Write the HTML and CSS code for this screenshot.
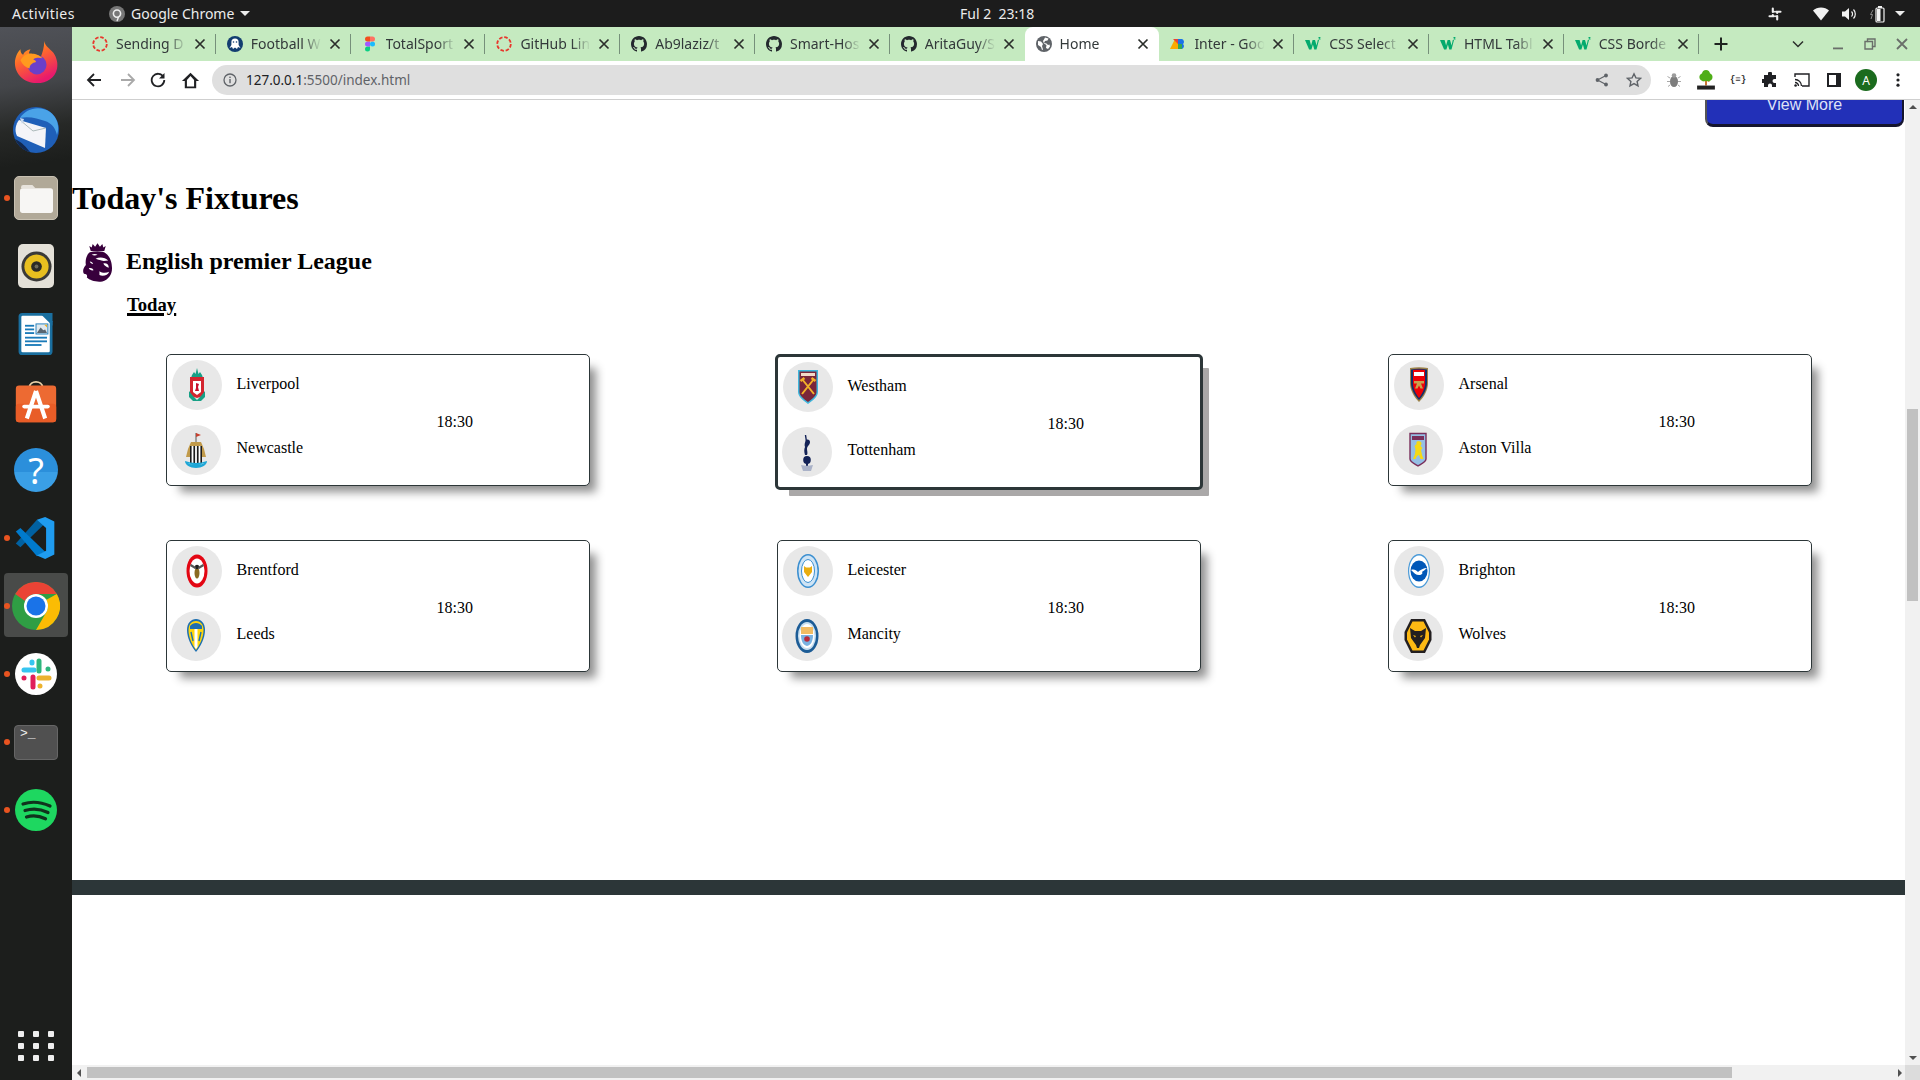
FILE: index.html
```html
<!DOCTYPE html>
<html lang="en">
<head>
<meta charset="utf-8">
<title>Home</title>
<link rel="stylesheet" href="styles.css">
</head>
<body>
<svg class="defs" width="0" height="0" aria-hidden="true">
  <defs>
    <symbol id="gh" viewBox="0 0 16 16"><path fill="#24292e" d="M8 0C3.58 0 0 3.58 0 8c0 3.54 2.29 6.53 5.47 7.59.4.07.55-.17.55-.38 0-.19-.01-.82-.01-1.49-2.01.37-2.53-.49-2.69-.94-.09-.23-.48-.94-.82-1.13-.28-.15-.68-.52-.01-.53.63-.01 1.08.58 1.23.82.72 1.21 1.87.87 2.33.66.07-.52.28-.87.51-1.07-1.78-.2-3.64-.89-3.64-3.95 0-.87.31-1.59.82-2.15-.08-.2-.36-1.02.08-2.12 0 0 .67-.21 2.2.82.64-.18 1.32-.27 2-.27.68 0 1.36.09 2 .27 1.53-1.04 2.2-.82 2.2-.82.44 1.1.16 1.92.08 2.12.51.56.82 1.27.82 2.15 0 3.07-1.87 3.75-3.65 3.95.29.25.54.73.54 1.48 0 1.07-.01 1.93-.01 2.2 0 .21.15.46.55.38A8.013 8.013 0 0016 8c0-4.42-3.58-8-8-8z"/></symbol>
    <symbol id="x" viewBox="0 0 16 16"><path d="M3.5 3.5l9 9M12.5 3.5l-9 9" stroke="#2b2f2b" stroke-width="1.7" fill="none"/></symbol>
    <symbol id="load" viewBox="0 0 16 16"><circle cx="8" cy="8" r="6.8" fill="none" stroke="#e8372c" stroke-width="1.8" stroke-dasharray="3.6 1.74"/></symbol>
    <symbol id="w3" viewBox="0 0 16 16"><path fill="#04aa6d" d="M0 4h4.600l1.500 5.400L7.600 4h2.400l1.600 5.400L12.800 4H14l-2.500 9.500H9.300L7.900 8.500l-1.500 5H4.100z"/><path fill="#04aa6d" d="M13.500 1h2v.6l-.9.8h.9v1.100h-2V3h1.100l-1.100-.8z"/></symbol>
  </defs>
</svg>

<header class="topbar">
  <div class="topbar-left">
    <span class="activities">Activities</span>
    <span class="appmenu">
      <svg class="ic16" viewBox="0 0 16 16"><circle cx="8" cy="8" r="8" fill="#777"/><circle cx="8" cy="7.600" r="3.600" fill="none" stroke="#eee" stroke-width="1.600"/><path d="M9.500 11l-1.500 4" stroke="#eee" stroke-width="1.400"/></svg>
      <span>Google Chrome</span>
      <i class="caret"></i>
    </span>
  </div>
  <div class="clock">Ful 2&nbsp; 23:18</div>
  <div class="tray">
    <svg class="tray-slack" viewBox="0 0 14 14"><g fill="none" stroke="#eee" stroke-width="2.100" stroke-linecap="round"><path d="M4.800 1.500v3.500M4.800 8v1M9.200 5v1M9.200 9v3.500M1.500 9.200h4.500M8 9.200h.5M8 4.800h4.500M5 4.800h1"/></g></svg>
    <svg class="tray-wifi" viewBox="0 0 16 14"><path fill="#f2f2f2" d="M8 13.500L0 3.600C2 1.700 5 .6 8 .6s6 1.100 8 3z"/></svg>
    <svg class="tray-vol" viewBox="0 0 16 14"><path fill="#f2f2f2" d="M1 4.500h3L8 1v12L4 9.500H1z"/><path d="M10.500 4.500a3.500 3.500 0 010 5M12.500 2.500a6.500 6.500 0 010 9" fill="none" stroke="#f2f2f2" stroke-width="1.200"/></svg>
    <svg class="tray-bat" viewBox="0 0 18 18"><path d="M4 5L1.500 9.500H3.500L2 14" fill="none" stroke="#888" stroke-width="1"/><rect x="7" y="3" width="8" height="14" rx="1" fill="none" stroke="#f2f2f2" stroke-width="1.200"/><rect x="9" y="1" width="4" height="2" fill="#f2f2f2"/><rect x="8" y="4" width="3.500" height="12" fill="#f2f2f2"/></svg>
    <i class="caret tray-caret"></i>
  </div>
</header>

<div class="desktop">
  <nav class="dock">
    <div class="dock-item">
      <svg class="dock-ic" viewBox="0 0 48 48"><defs><linearGradient id="ff" x1="0" y1="0" x2="0.500" y2="1"><stop offset="0" stop-color="#ffc21f"/><stop offset=".45" stop-color="#ff6a2b"/><stop offset="1" stop-color="#e8196d"/></linearGradient></defs><path fill="url(#ff)" d="M33 1c1 6 6 8 10 13 4 6 5 12 4 17-2 10-11 16-22 16C11 47 1 37 1 25c0-6 3-12 6-15 0 3 1 5 3 6 1-3 4-5 8-6-2 3-2 5-1 6 5-1 9 0 12 3 2-5 4-11 4-18z"/><circle cx="25" cy="27" r="10.500" fill="#6b3fc9"/><path fill="#ff9a1f" d="M7 22c3-5 8-8 13-7 5 0 9 3 11 5-3-1-7-1-10 1 2 1 3 2 3 3-4 1-7 3-7 7-4-1-8-4-10-9z"/></svg>
    </div>
    <div class="dock-item">
      <svg class="dock-ic dock-ic-lg" viewBox="0 0 48 48"><circle cx="24" cy="24" r="23" fill="#1f5fb8"/><path fill="#4aa3e8" d="M8 12C14 2 28-1 38 6c7 5 10 14 7 23-2-8-6-12-12-14-7-2-15-5-25-3z"/><path fill="#f4f4f8" d="M7 14l27 8-1 20L5 30c-3-6-1-12 2-16z"/><path fill="none" stroke="#9aa" stroke-width=".8" d="M8 14l13 11 13-3"/><path fill="#12284f" d="M3 33c3 7 9 12 15 13-4-5-7-9-15-13z"/><path fill="#c7d9ef" d="M8 12l4 1-2 5z"/></svg>
    </div>
    <div class="dock-item has-dot">
      <span class="tile tile-files"><svg viewBox="0 0 32 28"><path fill="#e7e3dc" d="M1 3a2 2 0 012-2h9l3 3H1z"/><rect x="0" y="4" width="32" height="24" rx="2.500" fill="#f7f6f4"/></svg></span>
    </div>
    <div class="dock-item">
      <span class="tile tile-rhythm"><svg viewBox="0 0 32 32"><circle cx="16" cy="16" r="15.500" fill="#3a3a38"/><circle cx="16" cy="16" r="12.500" fill="#e8bf1f"/><circle cx="16" cy="16" r="5.500" fill="#2b2a26"/><circle cx="16" cy="16" r="2" fill="#6d6a5b"/></svg></span>
    </div>
    <div class="dock-item">
      <svg class="dock-ic" viewBox="0 0 48 48"><path fill="#1a6f9f" d="M9 1h24l9 9v33a4 4 0 01-4 4H9a4 4 0 01-4-4V5a4 4 0 014-4z"/><rect x="8" y="4" width="31" height="40" rx="1.500" fill="#fff"/><path fill="#1a6f9f" d="M28 1h14v14z"/><g fill="#1a7ab8"><rect x="12" y="14" width="10" height="2"/><rect x="12" y="18" width="10" height="2"/><rect x="12" y="22" width="10" height="2"/><rect x="12" y="27" width="24" height="2"/><rect x="12" y="31" width="24" height="2"/><rect x="12" y="35" width="18" height="2"/></g><rect x="24" y="13" width="13" height="11" fill="#dfe8ee" stroke="#1a7ab8"/><path fill="#5a6670" d="M25 23l4-6 3 3 2-1 2 4z"/><path fill="#f2b021" d="M33 14h3v3z"/></svg>
    </div>
    <div class="dock-item">
      <svg class="dock-ic" viewBox="0 0 48 48"><path d="M17 8c0-8 14-8 14 0" fill="none" stroke="#e8d0a8" stroke-width="2"/><rect x="2" y="6" width="44" height="40" rx="3.500" fill="#ed6a32"/><rect x="2" y="26" width="44" height="20" rx="3.500" fill="#e95d27"/><path d="M24 12L14 42M24 12l10 30" stroke="#fff" stroke-width="4.500" fill="none"/><rect x="9" y="27" width="30" height="4" rx="2" fill="#fff"/></svg>
    </div>
    <div class="dock-item">
      <span class="help">?</span>
    </div>
    <div class="dock-item has-dot">
      <svg class="dock-ic" viewBox="0 0 48 48"><path fill="#0065a9" d="M2 30l5 4 27-26L25 4z" opacity=".95"/><path fill="#007acc" d="M2 17l5-4 27 26-9 5z"/><path fill="#1f9cf0" d="M34 1l10 5v36l-10 5-9-4 10-5V13L25 4z"/></svg>
    </div>
    <div class="dock-item has-dot active">
      <span class="dock-active"></span>
      <svg class="dock-ic dock-ic-lg" viewBox="0 0 48 48"><circle cx="24" cy="24" r="24" fill="#2f9e44"/><path fill="#ea4335" d="M3.200 12A24 24 0 0144.800 12H24a12 12 0 00-11 7z"/><path fill="#fbbc04" d="M44.800 12A24 24 0 0124 48L34.400 30a12 12 0 00-.4-12z"/><circle cx="24" cy="24" r="12" fill="#fff"/><circle cx="24" cy="24" r="9.500" fill="#1a73e8"/></svg>
    </div>
    <div class="dock-item has-dot">
      <svg class="dock-ic" viewBox="0 0 44 44"><circle cx="22" cy="22" r="21" fill="#fff"/><g stroke-width="5" stroke-linecap="round" fill="none"><path stroke="#36c5f0" d="M10 18h10M18 10v1"/><path stroke="#2eb67d" d="M25 9v10M34 17h0"/><path stroke="#ecb22e" d="M25 26h10M26 34h0"/><path stroke="#e01e5a" d="M19 25v10M10 26h0"/></g></svg>
    </div>
    <div class="dock-item has-dot">
      <span class="tile tile-term">&gt;_</span>
    </div>
    <div class="dock-item has-dot">
      <svg class="dock-ic" viewBox="0 0 44 44"><circle cx="22" cy="22" r="21" fill="#1ed760"/><g fill="none" stroke="#10331d" stroke-width="3.200" stroke-linecap="round"><path d="M9 16c9-3 18-2 27 2"/><path d="M11 22.500c8-2.500 16-1.500 23 2"/><path d="M12.500 29c6-2 13-1.200 19 1.800"/></g></svg>
    </div>
    <div class="apps-grid"><i></i><i></i><i></i><i></i><i></i><i></i><i></i><i></i><i></i></div>
  </nav>

  <div class="browser">
    <div class="tabstrip">
      <div class="tab"><svg class="ic16"><use href="#load"/></svg><span class="tab-title">Sending D</span><svg class="tab-x"><use href="#x"/></svg></div>
      <div class="tab"><svg class="ic16" viewBox="0 0 16 16"><circle cx="8" cy="8" r="8" fill="#123d70"/><path fill="#fff" d="M8 2.500a3.600 3.600 0 00-3.600 3.600v3L2.500 12l2.500-1 1 2 2-1.500 2 1.500 1-2 2.500 1-1.900-2.900v-3A3.600 3.600 0 008 2.500z"/><circle cx="6.500" cy="6" r=".8" fill="#123d70"/><circle cx="9.500" cy="6" r=".8" fill="#123d70"/></svg><span class="tab-title">Football W</span><svg class="tab-x"><use href="#x"/></svg></div>
      <div class="tab"><svg class="ic16" viewBox="0 0 16 16"><circle cx="10.500" cy="8" r="2.500" fill="#1abcfe"/><path fill="#0acf83" d="M5.500 10.500H8V13a2.500 2.500 0 11-2.500-2.500z"/><path fill="#a259ff" d="M5.500 5.500H8v5H5.500a2.500 2.500 0 010-5z"/><path fill="#f24e1e" d="M5.500.5H8v5H5.500a2.500 2.500 0 010-5z"/><path fill="#ff7262" d="M8 .5h2.500a2.500 2.500 0 010 5H8z"/></svg><span class="tab-title">TotalSport</span><svg class="tab-x"><use href="#x"/></svg></div>
      <div class="tab"><svg class="ic16"><use href="#load"/></svg><span class="tab-title">GitHub Lin</span><svg class="tab-x"><use href="#x"/></svg></div>
      <div class="tab"><svg class="ic16"><use href="#gh"/></svg><span class="tab-title">Ab9laziz/t</span><svg class="tab-x"><use href="#x"/></svg></div>
      <div class="tab"><svg class="ic16"><use href="#gh"/></svg><span class="tab-title">Smart-Hos</span><svg class="tab-x"><use href="#x"/></svg></div>
      <div class="tab tab-nodiv"><svg class="ic16"><use href="#gh"/></svg><span class="tab-title">AritaGuy/S</span><svg class="tab-x"><use href="#x"/></svg></div>
      <div class="tab tab-active"><svg class="ic16" viewBox="0 0 16 16"><circle cx="8" cy="8" r="8" fill="#5f6368"/><path fill="#fff" d="M2 5l3 .500 2 2.500-1 2 1 3.500-1 .500-1-3-3-2zM9 1.500l3.500 1-1 2-2.500.500-1 2 2.500.500 1.500 1.500 1.500-.500.500 2-2 2.500-2-1 .500-3-2.500-1.500-1-2.500 1.500-2.500z"/></svg><span class="tab-title">Home</span><svg class="tab-x"><use href="#x"/></svg></div>
      <div class="tab"><svg class="ic16" viewBox="0 0 16 16"><path fill="#f9ab00" d="M0 13L5 3l3 0v10z"/><path fill="#ea4335" d="M3 3h5v5z"/><path fill="#1a73e8" d="M8 3h4a3 3 0 011 5 3 3 0 01-1 5H8z"/><path fill="#34a853" d="M8 8h4v5H8z"/></svg><span class="tab-title">Inter - Goo</span><svg class="tab-x"><use href="#x"/></svg></div>
      <div class="tab"><svg class="ic16"><use href="#w3"/></svg><span class="tab-title">CSS Select</span><svg class="tab-x"><use href="#x"/></svg></div>
      <div class="tab"><svg class="ic16"><use href="#w3"/></svg><span class="tab-title">HTML Tabl</span><svg class="tab-x"><use href="#x"/></svg></div>
      <div class="tab"><svg class="ic16"><use href="#w3"/></svg><span class="tab-title">CSS Borde</span><svg class="tab-x"><use href="#x"/></svg></div>
      <div class="newtab"><svg class="ic16" viewBox="0 0 16 16"><path d="M8 1.500v13M1.500 8h13" stroke="#1f2420" stroke-width="2" fill="none"/></svg></div>
      <div class="win-btn win-chevron"><svg class="ic12" viewBox="0 0 12 12"><path d="M1 3.500l5 5 5-5" stroke="#2b2f2b" stroke-width="1.500" fill="none"/></svg></div>
      <div class="win-btn win-min"><svg class="ic12" viewBox="0 0 12 12"><rect x="1" y="9.500" width="10" height="1.800" fill="#6a6f6a"/></svg></div>
      <div class="win-btn"><svg class="ic12" viewBox="0 0 12 12"><path d="M3.500 1h7.500v7.500H8.500V11H1V3.500h2.500z" fill="none" stroke="#6a6f6a" stroke-width="1.400"/><path d="M3.500 3.500h5v5" fill="none" stroke="#6a6f6a" stroke-width="1.400"/></svg></div>
      <div class="win-btn"><svg class="ic12" viewBox="0 0 12 12"><path d="M1 1l10 10M11 1L1 11" stroke="#6a6f6a" stroke-width="1.800" fill="none"/></svg></div>
    </div>

    <div class="toolbar">
      <span class="tbtn"><svg class="ic16" viewBox="0 0 16 16"><path d="M15 8H2M8 2L2 8l6 6" stroke="#202124" stroke-width="1.800" fill="none"/></svg></span>
      <span class="tbtn"><svg class="ic16" viewBox="0 0 16 16"><path d="M1 8h13M8 2l6 6-6 6" stroke="#a9a9a9" stroke-width="1.800" fill="none"/></svg></span>
      <span class="tbtn"><svg class="ic16" viewBox="0 0 16 16"><path d="M13.500 5A6.300 6.300 0 1014.300 8" stroke="#202124" stroke-width="1.800" fill="none"/><path d="M14.500 1v5.500H9z" fill="#202124"/></svg></span>
      <span class="tbtn"><svg class="ic-home" viewBox="0 0 16 16"><path d="M8 1.500L.8 8.500h2.400V14.500h9.600V8.500h2.400zM5 13V7.600L8 4.200l3 3.400V13z" fill="#202124"/></svg></span>
      <div class="omnibox">
        <svg class="ic-info" viewBox="0 0 14 14"><circle cx="7" cy="7" r="6" fill="none" stroke="#5f6368" stroke-width="1.300"/><rect x="6.300" y="6" width="1.400" height="4.200" fill="#5f6368"/><rect x="6.300" y="3.600" width="1.400" height="1.400" fill="#5f6368"/></svg>
        <span class="url"><b>127.0.0.1</b>:5500/index.html</span>
        <svg class="ic-share" viewBox="0 0 14 14"><circle cx="11" cy="2.500" r="1.900" fill="#5f6368"/><circle cx="11" cy="11.500" r="1.900" fill="#5f6368"/><circle cx="2.500" cy="7" r="1.900" fill="#5f6368"/><path d="M11 2.500L2.500 7l8.500 4.500" stroke="#5f6368" stroke-width="1.200" fill="none"/></svg>
        <svg class="ic-star" viewBox="0 0 16 16"><path d="M8 1.800l1.900 4.100 4.500.5-3.300 3 .9 4.500L8 11.600l-4 2.300.9-4.500-3.300-3 4.500-.5z" fill="none" stroke="#5f6368" stroke-width="1.400"/></svg>
      </div>
      <span class="tbtn"><svg class="ic16" viewBox="0 0 16 16"><ellipse cx="8" cy="9.500" rx="4" ry="5.500" fill="#7d7d7d"/><circle cx="8" cy="3.500" r="2.300" fill="#9c9c9c"/><path d="M4 6L1.500 4.500M4 9.500H1M4 13l-2 1.500M12 6l2.500-1.500M12 9.500h3M12 13l2 1.500" stroke="#a8a8a8" stroke-width="1"/></svg></span>
      <span class="tbtn"><svg class="ic18" viewBox="0 0 18 18"><path d="M9 8v6" stroke="#c4641a" stroke-width="1.600"/><path d="M9 7l-3 3M9 8l3 2.500" stroke="#c4641a" stroke-width="1"/><path fill="#4fae17" d="M9 0c2 0 3.500 1.500 3.600 3.200C14.500 3.800 15.500 6 14.500 8c-1 1.800-3 2.200-5.500 2-2.500.200-4.500-.200-5.500-2-1-2 0-4.200 1.900-4.800C5.500 1.500 7 0 9 0z"/><rect x="1" y="14" width="16" height="3.600" fill="#222"/></svg></span>
      <span class="tbtn ext-json">{≡}</span>
      <span class="tbtn"><svg class="ic16" viewBox="0 0 16 16"><path fill="#202124" d="M6 1.500a2 2 0 014 0V3h4v4h-1.500a2 2 0 000 4H14v4h-4v-1.500a2 2 0 00-4 0V15H2v-4H.500a2 2 0 010-4H2V3h4z"/></svg></span>
      <span class="tbtn"><svg class="ic16" viewBox="0 0 16 16"><path d="M1 5V2h14v12H8" fill="none" stroke="#202124" stroke-width="1.400"/><path d="M1 7.500a6.500 6.500 0 016.500 6.500M1 10.500A3.500 3.500 0 014.500 14" fill="none" stroke="#202124" stroke-width="1.300"/><circle cx="1.600" cy="13.500" r="1.300" fill="#202124"/></svg></span>
      <span class="tbtn"><svg class="ic16" viewBox="0 0 16 16"><rect x="1" y="1" width="14" height="14" fill="#202124"/><rect x="3" y="3" width="7" height="10" fill="#fff"/></svg></span>
      <span class="tbtn"><span class="avatar">A</span></span>
      <span class="tbtn"><svg class="ic16" viewBox="0 0 16 16"><circle cx="8" cy="2.800" r="1.600" fill="#202124"/><circle cx="8" cy="8" r="1.600" fill="#202124"/><circle cx="8" cy="13.200" r="1.600" fill="#202124"/></svg></span>
    </div>

    <div class="viewport">
      <main class="page">
        <div class="btn-row"><a class="view-more">View More</a></div>
        <h1 class="page-title">Today's Fixtures</h1>
        <div class="league">
          <svg class="league-logo" viewBox="0 0 32 40"><path fill="#38003c" d="M9 8L7.500 3l2.500 1.600L11 1l2.500 2.800L16 0l2.500 3.800L21 1l1 3.600L24.500 3 23 8z"/><path fill="#38003c" d="M8 9.500c6-1.500 14-1.500 17 1.500 4 3 6 9 6 15 0 7-4 12-10 13.500-6 1-13-1-16-4 1-3-1-4-3-4-2-3 0-7 2-9-1-5 1-11 4-13z"/><path fill="#fff" d="M10 12c2-1 4-1 6 0-2 1-4 1-6 0zM14 16c4-2 10-1.500 13 2-2.500 0-4.500 1-7 0-2-1-4-1-6-2zM22 21c3-1 6 1 5.500 4.500-2.500-.8-4.500-2.500-5.500-4.500zM18 29c3 2 7 2 10 .5-1 3.500-6 5-10 3.500zM8 19c2 0 3 1 3.500 2.500-1.500 0-3-.8-3.500-2.500zM7 26c2-.8 4 0 5 2-2 .5-4-.3-5-2z"/></svg>
          <h2 class="league-name">English premier League</h2>
        </div>
        <h3 class="day">Today</h3>
        <section class="fixtures">

          <article class="card">
            <div class="teams">
              <div class="team"><span class="logo"><svg viewBox="0 0 50 50"><path fill="#17a086" d="M20 15l2-3 1.500 2L25 8l1.500 6 1.500-2 2 3 1 3H19z"/><path fill="#d4252f" d="M18 17h14v16c0 3-3 4-7 5-4-1-7-2-7-5z"/><path fill="#fff" d="M21 21h8v11l-4 3-4-3z"/><path fill="#c8102e" d="M24 23l3 1-1 3 1 4h-4l1-3z"/><path fill="#17a086" d="M17 31l4 5 4 4 4-4 4-5v6l-4 4h-8l-4-4z"/></svg></span><span class="name">Liverpool</span></div>
              <div class="team"><span class="logo"><svg viewBox="0 0 50 50"><path d="M25 8v9" stroke="#555" stroke-width="1"/><path fill="#c8402e" d="M25 8l5 2-5 2z"/><path fill="#c19a4a" d="M17 24l3-7h10l3 7 2 8H15z"/><path fill="#1b1b1b" d="M19 21h12v17H19z"/><path stroke="#fff" stroke-width="1.800" d="M21.500 21v17M25 21v17M28.500 21v17"/><path fill="#1fa7d6" d="M14 36c4 1 7 2 11 2s7-1 11-2c0 4-5 7-11 7s-11-3-11-7z"/><path fill="#fff" d="M17 38c5 2 11 2 16 0-1 2-14 2-16 0z"/></svg></span><span class="name">Newcastle</span></div>
            </div>
            <time class="kick">18:30</time>
          </article>

          <article class="card card-hover">
            <div class="teams">
              <div class="team"><span class="logo"><svg viewBox="0 0 50 50"><path fill="#3fb6dc" d="M15 8h20v22c0 5-6 9-10 12-4-3-10-7-10-12z"/><path fill="#7a263a" d="M16.500 9.500h17V30c0 4-5 7.500-8.500 10-3.500-2.500-8.500-6-8.500-10z"/><path fill="#f3d9c8" d="M18 11h14v3H18z"/><path d="M19 17l12 15M31 17L19 32" stroke="#f3b229" stroke-width="2"/><path d="M17.500 19l4-3M32.500 19l-4-3" stroke="#f3b229" stroke-width="2.400"/></svg></span><span class="name">Westham</span></div>
              <div class="team"><span class="logo"><svg viewBox="0 0 50 50"><path d="M23.500 8l1 7" stroke="#132257" stroke-width="1.400"/><path fill="#132257" d="M24 13c2-1 4 0 4 2 0 3-3 4-3 7 0 2 1 4 0 6l-2 0c-1-3-1-6 0-8-1-2 0-5 1-7z"/><ellipse cx="25" cy="33" rx="3.800" ry="4" fill="#132257"/><path fill="#132257" d="M24 36h2v3h-2z"/><path fill="#aab2c8" d="M19 38c4 1 8 1 12 0l-1 3-1 3h-8l-1-3z"/></svg></span><span class="name">Tottenham</span></div>
            </div>
            <time class="kick">18:30</time>
          </article>

          <article class="card">
            <div class="teams">
              <div class="team"><span class="logo"><svg viewBox="0 0 50 50"><path fill="#9c824a" d="M16 8c6-1 12-1 18 0v15c0 7-4 14-9 19-5-5-9-12-9-19z"/><path fill="#12306a" d="M17 9.500c5-1 11-1 16 0v13.500c0 6-3.500 12.500-8 17-4.500-4.500-8-11-8-17z"/><path fill="#ef0107" d="M19 10c4-.4 8-.4 12 0v13c0 6-3 11-6 15-3-4-6-9-6-15z"/><path fill="#fff" d="M20 12h10v4H20z"/><path fill="#c9a24d" d="M20 21h10v2.500h-3l2 5h-2.500l-1.500-3-1.500 3H21l2-5h-3z"/></svg></span><span class="name">Arsenal</span></div>
              <div class="team"><span class="logo"><svg viewBox="0 0 50 50"><path fill="#95bfe5" stroke="#7a2f5b" stroke-width="1.400" d="M17 8.500h16V34c0 3-5 5-8 7-3-2-8-4-8-7z"/><path fill="#7a2f5b" d="M19 11h12v4H19z"/><path fill="#f6d915" d="M25 16c2 0 4 1 3.500 3l-1 2 2 2-1.500 2 1 5 1.500 4h-3l-1.500-4-2 1-1.500 3h-2.500l2-5 .5-5-1-3 2-2c-.5-2 .5-3 2-3z"/></svg></span><span class="name">Aston Villa</span></div>
            </div>
            <time class="kick">18:30</time>
          </article>

          <article class="card">
            <div class="teams">
              <div class="team"><span class="logo"><svg viewBox="0 0 50 50"><ellipse cx="25" cy="25" rx="10.500" ry="16.500" fill="#e30613"/><ellipse cx="25" cy="25" rx="7.500" ry="12.500" fill="#fff"/><ellipse cx="25" cy="27" rx="2.500" ry="5.500" fill="#8a6a22"/><circle cx="25" cy="21" r="2.200" fill="#222"/><path d="M18.500 19l5 3M31.500 19l-5 3" stroke="#555" stroke-width="2.200"/></svg></span><span class="name">Brentford</span></div>
              <div class="team"><span class="logo"><svg viewBox="0 0 50 50"><path fill="#1d6fb0" d="M25 8c5 0 9 4 9 11 0 9-5 17-9 22-4-5-9-13-9-22 0-7 4-11 9-11z"/><path fill="#ffd60a" d="M25 10c4 0 7.500 3 7.500 9 0 8-4 15-7.500 20-3.500-5-7.500-12-7.500-20 0-6 3.500-9 7.500-9z"/><path fill="#1d6fb0" d="M19 15c3-4 9-4 12 0v3H19z"/><path fill="#fff" d="M23.500 18h3v18l-1.500 2-1.500-2z"/><path d="M20 21l2 9M30 21l-2 9" stroke="#1d6fb0" stroke-width="1.400"/></svg></span><span class="name">Leeds</span></div>
            </div>
            <time class="kick">18:30</time>
          </article>

          <article class="card">
            <div class="teams">
              <div class="team"><span class="logo"><svg viewBox="0 0 50 50"><ellipse cx="25" cy="25" rx="11" ry="17" fill="#3b8fd0"/><ellipse cx="25" cy="25" rx="9.500" ry="15.500" fill="#cfe4f5"/><ellipse cx="25" cy="25" rx="6.500" ry="11.500" fill="#fff" stroke="#3b8fd0"/><path fill="#e9ad10" d="M21 20l2 1.500h4l2-1.500v6l-4 5-4-5z"/></svg></span><span class="name">Leicester</span></div>
              <div class="team"><span class="logo"><svg viewBox="0 0 50 50"><ellipse cx="25" cy="25" rx="11.500" ry="17" fill="#1c5c96"/><ellipse cx="25" cy="25" rx="9" ry="14" fill="#c8dff0"/><ellipse cx="25" cy="25" rx="7.500" ry="12" fill="#fff"/><path fill="#f2bc63" d="M19 16h12v7H19z"/><path fill="#7ab2e1" d="M19 24h12c0 6-2 10-6 11-4-1-6-5-6-11z"/><circle cx="25" cy="28" r="2.800" fill="#b92b3c"/></svg></span><span class="name">Mancity</span></div>
            </div>
            <time class="kick">18:30</time>
          </article>

          <article class="card">
            <div class="teams">
              <div class="team"><span class="logo"><svg viewBox="0 0 50 50"><ellipse cx="25" cy="25" rx="11" ry="17" fill="#4a9ad8"/><ellipse cx="25" cy="25" rx="9.800" ry="15.600" fill="#fff"/><ellipse cx="25" cy="25" rx="8.500" ry="10.500" fill="#0057b8"/><path fill="#fff" d="M17 24c3-1 5 0 7 2 2-2 6-4 9-4-2 2-4 3-5 4 1 1 0 3-3 3-3 0-5-2-8-5z"/></svg></span><span class="name">Brighton</span></div>
              <div class="team"><span class="logo"><svg viewBox="0 0 50 50"><path fill="#231f20" d="M18 8h14l6.500 13v8L32 42H18l-6.500-13v-8z"/><path fill="#fdb913" d="M19.500 10.500h11l5.500 11v7l-5.500 11h-11L14 28.500v-7z"/><path fill="#231f20" d="M17 17l5 3h6l5-3-1 10-5 7-1 3h-2l-1-3-5-7z"/><path fill="#fdb913" d="M20 24l3 1-1 1.500zM30 24l-3 1 1 1.500z"/></svg></span><span class="name">Wolves</span></div>
            </div>
            <time class="kick">18:30</time>
          </article>

        </section>
        <footer class="page-footer"></footer>
      </main>
      <div class="vscroll">
        <i class="arrow-up"></i>
        <div class="vtrack"><div class="vthumb"></div></div>
        <i class="arrow-down"></i>
      </div>
    </div>
    <div class="hscroll">
      <i class="arrow-left"></i>
      <div class="htrack"><div class="hthumb"></div></div>
      <i class="arrow-right"></i>
      <div class="corner"></div>
    </div>
  </div>
</div>
</body>
</html>
```
FILE: styles.css
```css
* { box-sizing: border-box; }
html, body { margin: 0; height: 100%; overflow: hidden; }
body { width: 1920px; height: 1080px; display: flex; flex-direction: column; font-family: "Liberation Serif", serif; background: #fff; color: #000; }
svg { display: block; flex: none; }
.defs { position: absolute; }
.ic16 { width: 16px; height: 16px; }
.ic12 { width: 12px; height: 12px; }
.ic18 { width: 20px; height: 20px; }
.ic-home { width: 19px; height: 19px; }

/* ---------- top bar ---------- */
.topbar { height: 27px; flex: none; background: #1c1c1c; color: #ececec; display: grid; grid-template-columns: 948px 74px 1fr; align-items: center; font: 14px "Noto Sans", sans-serif; padding-left: 12px; }
.topbar-left { display: flex; align-items: center; }
.activities { width: 97px; letter-spacing: .45px; }
.appmenu { display: flex; align-items: center; gap: 6px; }
.caret { width: 0; height: 0; border-left: 5px solid transparent; border-right: 5px solid transparent; border-top: 5px solid #ececec; }
.clock { white-space: nowrap; }
.tray { display: flex; align-items: center; justify-content: flex-end; padding-right: 15px; }
.tray-slack { width: 14px; height: 14px; margin-right: 31px; }
.tray-wifi { width: 16px; height: 14px; margin-right: 12px; }
.tray-vol { width: 16px; height: 14px; margin-right: 12px; }
.tray-bat { width: 18px; height: 18px; margin-right: 8px; }

/* ---------- dock ---------- */
.desktop { flex: 1; display: flex; min-height: 0; }
.dock { width: 72px; flex: none; display: flex; flex-direction: column; align-items: center; padding-top: 1px;
  background:
    linear-gradient(172deg, rgba(80,82,88,1) 0, rgba(70,72,76,.95) 60px, rgba(40,42,40,.9) 105px, rgba(28,30,28,1) 140px),
    #1a1b1b; }
.dock-item { width: 72px; height: 68px; flex: none; display: flex; align-items: center; justify-content: center; position: relative; }
.has-dot::before { content: ""; position: absolute; left: 4px; top: 31px; width: 6px; height: 6px; border-radius: 50%; background: #e95420; z-index: 2; }
.dock-ic { width: 44px; height: 44px; position: relative; }
.dock-ic-lg { width: 48px; height: 48px; }
.dock-active { position: absolute; left: 4px; top: 1px; width: 64px; height: 64px; border-radius: 4px; background: rgba(255,255,255,.2); }
.tile { display: flex; align-items: center; justify-content: center; }
.tile-files { width: 44px; height: 44px; border-radius: 5px; background: #b1a998; border: 1px solid #c8c1b2; }
.tile-files svg { width: 33px; height: 29px; }
.tile-rhythm { width: 36px; height: 44px; border-radius: 5px; background: #e4e1d8; }
.tile-rhythm svg { width: 31px; height: 31px; }
.help { width: 44px; height: 44px; border-radius: 50%; background: linear-gradient(#2b8fdb 55%, #3a9fe6 55%); color: #fff; display: flex; align-items: center; justify-content: center; font: 400 36px "Noto Sans", sans-serif; }
.tile-term { width: 44px; height: 35px; border-radius: 4px; background: #505050; border: 1px solid #666; color: #eee; font: 13px "Liberation Mono", monospace; justify-content: flex-start; align-items: flex-start; padding-left: 5px; }
.apps-grid { margin-top: auto; margin-bottom: 19px; width: 36px; display: grid; grid-template-columns: repeat(3, 6px); justify-content: space-between; row-gap: 6px; }
.apps-grid i { width: 6px; height: 6px; border-radius: 1px; background: #eee; }

/* ---------- browser chrome ---------- */
.browser { flex: 1; min-width: 0; display: flex; flex-direction: column; }
.tabstrip { height: 34px; flex: none; background: #c5eac0; display: flex; padding-left: 9px; font: 14px "Noto Sans", sans-serif; color: #33393a; }
.tab { width: 134.8px; flex: none; display: flex; align-items: center; padding: 0 8px 0 11px; position: relative; }
.tab::after { content: ""; position: absolute; right: 0; top: 7px; height: 20px; width: 1px; background: #76907a; }
.tab-nodiv::after, .tab-active::after { display: none; }
.tab-active { background: #fff; border-radius: 8px 8px 0 0; }
.tab-title { flex: 1; min-width: 0; margin: 0 4px 0 8px; padding-bottom: 2px; white-space: nowrap; -webkit-mask-image: linear-gradient(to right, #000 72%, transparent 98%); mask-image: linear-gradient(to right, #000 72%, transparent 98%); }
.tab-x { width: 16px; height: 16px; }
.newtab { width: 45px; flex: none; display: flex; align-items: center; justify-content: center; }
.win-btn { width: 32px; flex: none; display: flex; align-items: center; justify-content: center; }
.win-chevron { margin-left: auto; margin-right: 8px; }
.win-btn:last-child { margin-right: 2px; }

.toolbar { height: 39px; flex: none; background: #fff; border-bottom: 1px solid #cfcfcf; padding: 4px 6px 4px 6px; display: grid; grid-template-columns: 32px 36px 24px 40px minmax(0, 1fr) repeat(8, 32px); align-items: center; }
.tbtn { display: flex; align-items: center; justify-content: center; }
.omnibox { height: 30px; margin: 0 7px 0 2px; background: #dfdfdf; border-radius: 15px; display: flex; align-items: center; padding: 0 9px 0 11px; font: 13.500px "Noto Sans", sans-serif; color: #5f6368; }
.ic-info { width: 14px; height: 14px; }
.url { margin-left: 9px; flex: 1; padding-bottom: 1px; }
.url b { font-weight: 400; color: #202124; }
.ic-share { width: 14px; height: 14px; margin-right: 17px; }
.ic-star { width: 16px; height: 16px; }
.ext-json { font: 700 9px "Liberation Mono", monospace; color: #333; }
.avatar { width: 22px; height: 22px; border-radius: 50%; background: #1b6b1e; color: #fff; font: 12px "Noto Sans", sans-serif; display: flex; align-items: center; justify-content: center; }

/* ---------- page ---------- */
.viewport { flex: 1; min-height: 0; display: flex; }
.page { flex: 1; min-width: 0; overflow: hidden; background: #fff; display: flex; flex-direction: column; }
.btn-row { height: 27px; flex: none; display: flex; justify-content: flex-end; align-items: flex-end; }
.view-more { width: 199px; height: 44px; flex: none; margin-right: 1px; background: #2230b8; border: 1px solid #555; border-width: 0 2px 3px 2px; border-bottom-color: #15152e; border-right-color: #15152e; border-radius: 0 0 8px 8px; color: #dfe2f7; font: 16px/1 "Liberation Sans", sans-serif; display: flex; justify-content: center; padding-top: 14px; }
.page-title { margin: 53px 0 0; font-size: 32px; line-height: 37px; font-weight: 700; }
.league { display: flex; align-items: center; margin: 25px 0 0 10px; height: 38px; }
.league-logo { width: 31px; height: 39px; margin-top: 3px; }
.league-name { margin: 0 0 0 13px; font-size: 24px; line-height: 28px; font-weight: 700; }
.day { margin: 14px 0 0 55px; font-size: 18.72px; line-height: 22px; font-weight: 700; text-decoration: underline; text-decoration-thickness: 3px; }
.fixtures { margin-top: 38px; display: grid; grid-template-columns: repeat(3, 424px); justify-content: space-around; justify-items: center; align-items: start; row-gap: 50px; }
.card { width: 424px; height: 132px; border: 1px solid #2c3638; border-radius: 5px; background: #fff; padding: 5px 0 10px 4px; display: flex; align-items: center; box-shadow: 10px 10px 10px -4px #8f8f8f; }
.card-hover { width: 428px; height: 136px; border-width: 3px; padding-left: 4px; box-shadow: 10px 10px 0 -4px #aaa8a8; }
.teams { width: 266px; flex: none; display: flex; flex-direction: column; gap: 15px; }
.team { display: flex; align-items: center; gap: 16px; font-size: 16px; }
.team:first-child .logo { margin: 0 -1px 0 1px; }
.team:first-child .name { padding-bottom: 3px; }
.logo { width: 50px; height: 50px; border-radius: 50%; background: #e8e8e8; flex: none; }
.logo svg { width: 50px; height: 50px; }
.name { padding-bottom: 5px; }
.kick { font-size: 16px; padding-top: 9px; }
.page-footer { height: 15px; flex: none; margin-top: 208px; background: #2c3638; }

/* ---------- scrollbars ---------- */
.vscroll { width: 15px; flex: none; background: #f1f1f1; display: flex; flex-direction: column; align-items: center; padding: 5px 0; }
.vtrack { flex: 1; width: 100%; padding-top: 300px; }
.vthumb { height: 192px; margin: 0 2px; background: #c1c1c1; }
.arrow-up, .arrow-down, .arrow-left, .arrow-right { width: 0; height: 0; flex: none; }
.arrow-up { border: 4px solid transparent; border-top: 0; border-bottom: 4px solid #505050; }
.arrow-down { border: 4px solid transparent; border-bottom: 0; border-top: 4px solid #505050; }
.hscroll { height: 15px; flex: none; background: #f1f1f1; display: flex; align-items: center; padding-left: 5px; }
.htrack { flex: 1; height: 100%; padding: 2px 0 2px 6px; }
.hthumb { width: 1645px; height: 11px; background: #c1c1c1; }
.arrow-left { border: 4px solid transparent; border-left: 0; border-right: 4px solid #505050; }
.arrow-right { border: 4px solid transparent; border-right: 0; border-left: 4px solid #505050; margin-right: 3px; }
.corner { width: 15px; height: 15px; flex: none; background: #dcdcdc; }
```
